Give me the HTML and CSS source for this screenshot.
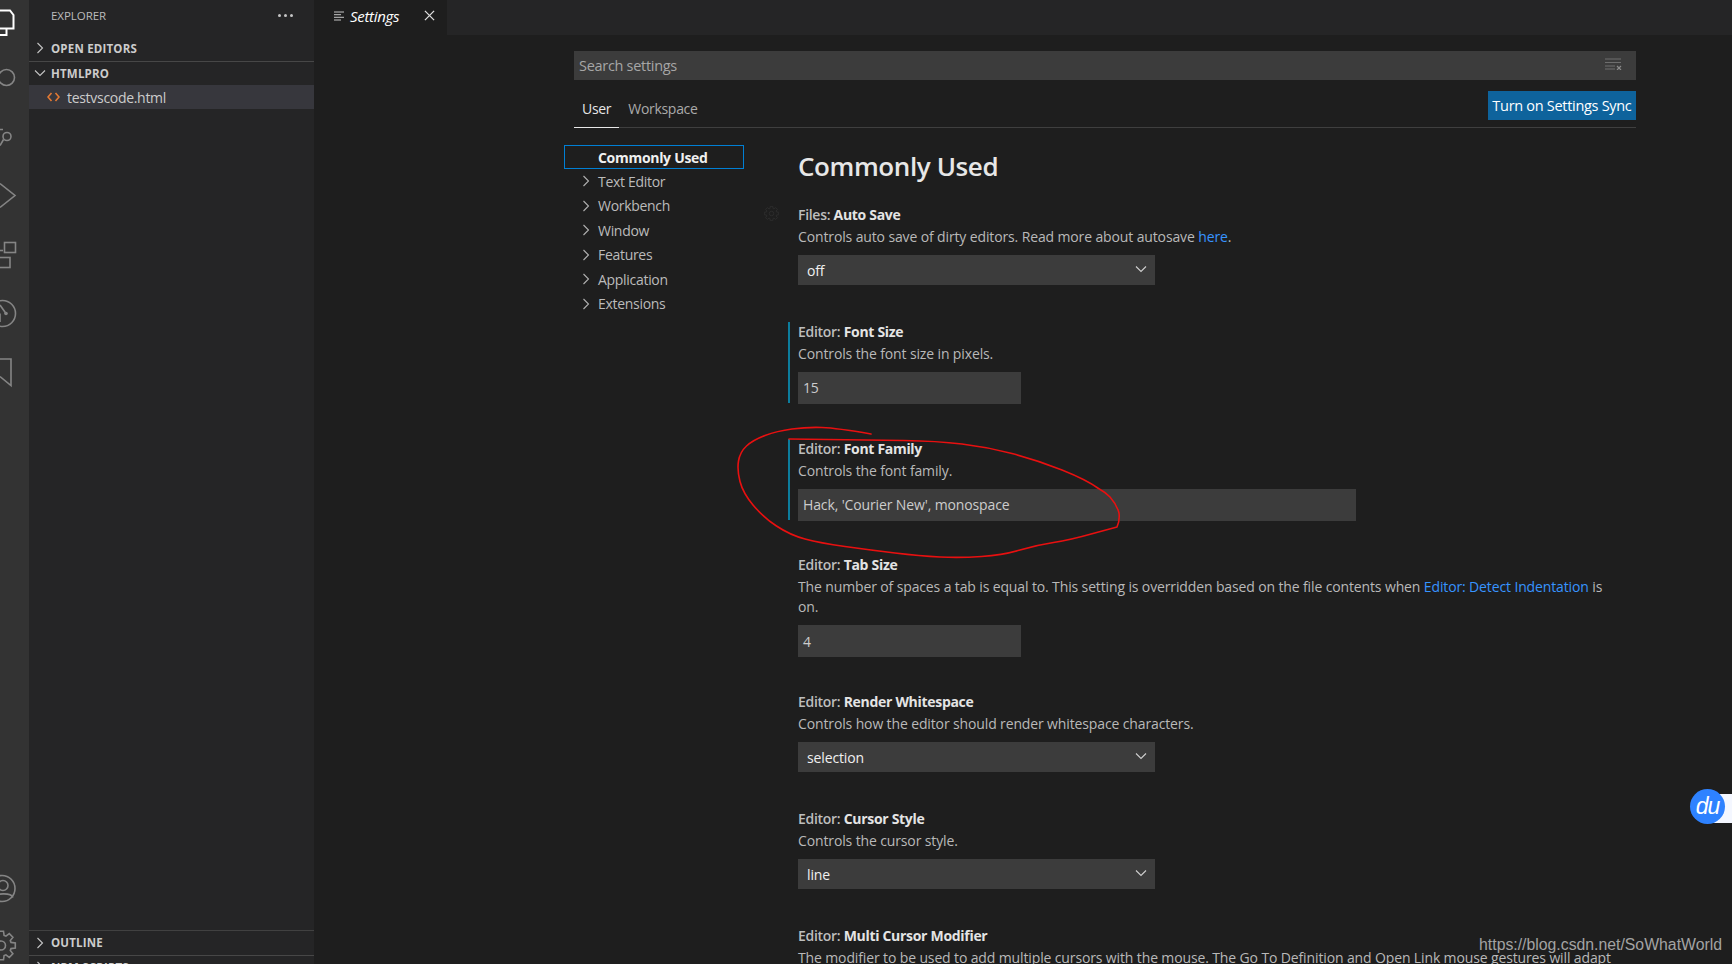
FILE: index.html
```html
<!DOCTYPE html>
<html lang="en">
<head>
    <meta charset="UTF-8">
    <title>Settings</title>
    <link rel="stylesheet" href="styles.css">
</head>
<body>
    <div class="app">
        <!-- activity bar, cut off on the left in the capture -->
        <nav class="activity">
            <div class="activity-list">
                <svg class="act-icon act-on" viewBox="0 0 29 59"><path d="M0 21.5H10L13.5 26V39.5H0M6.5 39.5V46H0"/></svg>
                <svg class="act-icon" viewBox="0 0 29 59"><circle cx="6.5" cy="29.5" r="8"/></svg>
                <svg class="act-icon" viewBox="0 0 29 59"><circle cx="7" cy="29.5" r="4"/><path d="M3.5 32.5L0 38.5M0 22.5H3"/></svg>
                <svg class="act-icon" viewBox="0 0 29 59"><path d="M0 17.5L15 29.5L0 41.5"/></svg>
                <svg class="act-icon" viewBox="0 0 29 59"><rect x="4.5" y="17.5" width="11" height="10"/><rect x="-3" y="32.5" width="13" height="10"/><path d="M0 25.5H3"/></svg>
                <svg class="act-icon" viewBox="0 0 29 59"><circle cx="2.5" cy="29.5" r="13"/><path d="M0 21L6 29.5M0 29.5V38"/><circle class="dot" cx="6" cy="29.5" r="1.8"/></svg>
                <svg class="act-icon" viewBox="0 0 29 59"><path d="M0 16H11V42.5L0 33.5"/></svg>
            </div>
            <div class="activity-list activity-bottom">
                <svg class="act-icon" viewBox="0 0 29 59"><circle cx="2" cy="31.5" r="13"/><circle cx="3" cy="28.5" r="5"/><path d="M-7 41.5C-5 35.5 11 35.5 13 40.5"/></svg>
                <svg class="act-icon" viewBox="0 0 29 59"><g transform="translate(1 29.5)"><path d="M-2.5 -14.3H2.5L3.1 -10L4.9 -9.3L8.3 -11.9L11.9 -8.3L9.3 -4.9L10 -3.1L14.3 -2.5V2.5L10 3.1L9.3 4.9L11.9 8.3L8.3 11.9L4.9 9.3L3.1 10L2.5 14.3H-2.5"/><circle r="4.5"/></g></svg>
            </div>
        </nav>

        <aside class="sidebar">
            <div class="side-head">
                <span>EXPLORER</span>
                <span class="dots"><i></i><i></i><i></i></span>
            </div>
            <div class="section">
                <svg class="chev" viewBox="0 0 12 12"><path d="M3.5 1L8.5 6L3.5 11"/></svg>
                OPEN EDITORS
            </div>
            <div class="section section-line">
                <svg class="chev" viewBox="0 0 12 12"><path d="M1 3.5L6 8.5L11 3.5"/></svg>
                HTMLPRO
            </div>
            <div class="file-row">
                <svg class="file-icon" viewBox="0 0 13 10"><path d="M4.5 1L1 5L4.5 9M8.5 1L12 5L8.5 9"/></svg>
                testvscode.html
            </div>
            <div class="side-space"></div>
            <div class="section section-line">
                <svg class="chev" viewBox="0 0 12 12"><path d="M3.5 1L8.5 6L3.5 11"/></svg>
                OUTLINE
            </div>
            <div class="section section-line section-cut">
                <svg class="chev" viewBox="0 0 12 12"><path d="M3.5 1L8.5 6L3.5 11"/></svg>
                NPM SCRIPTS
            </div>
        </aside>

        <main class="editor">
            <div class="tabbar">
                <div class="tab">
                    <svg class="tab-icon" viewBox="0 0 10 10"><path d="M0 1H10M0 3.7H7M0 6.3H10M0 9H7"/></svg>
                    <span class="tab-name">Settings</span>
                    <svg class="tab-close" viewBox="0 0 12 12"><path d="M1 1L11 11M11 1L1 11"/></svg>
                </div>
            </div>

            <div class="settings">
                <div class="search">
                    <span>Search settings</span>
                    <svg class="clear-icon" viewBox="0 0 17 12"><path d="M0 1H16M0 4.5H16M0 8H10M0 11H10"/><path class="x" d="M12 8L16 12M16 8L12 12"/></svg>
                </div>

                <div class="scope">
                    <span class="scope-tab scope-on">User</span>
                    <span class="scope-tab">Workspace</span>
                    <button class="sync">Turn on Settings Sync</button>
                </div>

                <div class="body">
                    <ul class="toc">
                        <li class="toc-on">Commonly Used</li>
                        <li><svg class="chev" viewBox="0 0 12 12"><path d="M3.5 1L8.5 6L3.5 11"/></svg>Text Editor</li>
                        <li><svg class="chev" viewBox="0 0 12 12"><path d="M3.5 1L8.5 6L3.5 11"/></svg>Workbench</li>
                        <li><svg class="chev" viewBox="0 0 12 12"><path d="M3.5 1L8.5 6L3.5 11"/></svg>Window</li>
                        <li><svg class="chev" viewBox="0 0 12 12"><path d="M3.5 1L8.5 6L3.5 11"/></svg>Features</li>
                        <li><svg class="chev" viewBox="0 0 12 12"><path d="M3.5 1L8.5 6L3.5 11"/></svg>Application</li>
                        <li><svg class="chev" viewBox="0 0 12 12"><path d="M3.5 1L8.5 6L3.5 11"/></svg>Extensions</li>
                    </ul>

                    <div class="list">
                        <h1>Commonly Used</h1>

                        <div class="item">
                            <svg class="row-gear" viewBox="-15 -15 30 30"><path d="M-2.5 -14.3H2.5L3.1 -10L4.9 -9.3L8.3 -11.9L11.9 -8.3L9.3 -4.9L10 -3.1L14.3 -2.5V2.5L10 3.1L9.3 4.9L11.9 8.3L8.3 11.9L4.9 9.3L3.1 10L2.5 14.3H-2.5L-3.1 10L-4.9 9.3L-8.3 11.9L-11.9 8.3L-9.3 4.9L-10 3.1L-14.3 2.5V-2.5L-10 -3.1L-9.3 -4.9L-11.9 -8.3L-8.3 -11.9L-4.9 -9.3L-3.1 -10Z"/><circle r="4.5"/></svg>
                            <div class="title">Files: <b>Auto Save</b></div>
                            <div class="desc">Controls auto save of dirty editors. Read more about autosave <a>here</a>.</div>
                            <div class="select">off<svg class="sel-chev" viewBox="0 0 12 12"><path d="M1 3.5L6 8.5L11 3.5"/></svg></div>
                        </div>

                        <div class="item item-mod">
                            <div class="title">Editor: <b>Font Size</b></div>
                            <div class="desc">Controls the font size in pixels.</div>
                            <div class="input input-num">15</div>
                        </div>

                        <div class="item item-mod">
                            <div class="title">Editor: <b>Font Family</b></div>
                            <div class="desc">Controls the font family.</div>
                            <div class="input input-wide">Hack, 'Courier New', monospace</div>
                        </div>

                        <div class="item item-long">
                            <div class="title">Editor: <b>Tab Size</b></div>
                            <div class="desc">The number of spaces a tab is equal to. This setting is overridden based on the file contents when <a>Editor: Detect Indentation</a> is on.</div>
                            <div class="input input-num">4</div>
                        </div>

                        <div class="item">
                            <div class="title">Editor: <b>Render Whitespace</b></div>
                            <div class="desc">Controls how the editor should render whitespace characters.</div>
                            <div class="select">selection<svg class="sel-chev" viewBox="0 0 12 12"><path d="M1 3.5L6 8.5L11 3.5"/></svg></div>
                        </div>

                        <div class="item">
                            <div class="title">Editor: <b>Cursor Style</b></div>
                            <div class="desc">Controls the cursor style.</div>
                            <div class="select">line<svg class="sel-chev" viewBox="0 0 12 12"><path d="M1 3.5L6 8.5L11 3.5"/></svg></div>
                        </div>

                        <div class="item">
                            <div class="title">Editor: <b>Multi Cursor Modifier</b></div>
                            <div class="desc">The modifier to be used to add multiple cursors with the mouse. The Go To Definition and Open Link mouse gestures will adapt</div>
                        </div>
                    </div>
                </div>
            </div>
        </main>
    </div>

    <!-- hand drawn mark over the Font Family setting -->
    <svg class="scribble" viewBox="0 0 1732 964">
        <path d="M871 434Q837 428 822 427.5Q807 427 792 429Q777 431 765 435.5Q753 440 746.5 446Q740 452 738.5 461Q737 470 740 481.5Q743 493 753 505Q763 517 776.5 526Q790 535 805 539Q820 543 845 546.5Q870 550 895 553Q920 556 940 557Q960 558 981.5 556.5Q1003 555 1020 550Q1037 545 1053.5 542.5Q1070 540 1093 533.5L1117 527Q1120 520 1119 513Q1117 505 1110 497Q1105 492 1098.5 488.5Q1087 480 1062 470Q1037 460 1012 453.5Q987 447 962 444Q937 441 903.5 440.5Q870 440 789 439"/>
    </svg>

    <div class="du-badge"><span class="du-circle">du</span></div>
    <div class="watermark">https://blog.csdn.net/SoWhatWorld</div>
</body>
</html>
```

FILE: styles.css
```css
* { box-sizing: border-box; }
html, body {
    margin: 0;
    height: 964px;
    overflow: hidden;
    background: #1e1e1e;
}
body {
    font-family: "Open Sans", "Noto Sans", sans-serif;
    font-size: 14px;
    letter-spacing: -0.3px;
    color: #ccc;
}
svg { fill: none; flex: none; }
ul { list-style: none; margin: 0; padding: 0; }
h1 { margin: 0; }

.app {
    display: flex;
    height: 964px;
}

/* activity bar */
.activity {
    width: 29px;
    flex: none;
    display: flex;
    flex-direction: column;
    justify-content: space-between;
    background: #333;
    overflow: hidden;
}
.activity-list {
    display: flex;
    flex-direction: column;
    margin-top: -11.5px;
}
.activity-bottom { margin: 0 0 -11px; }
.act-icon {
    display: block;
    width: 29px;
    height: 59px;
    stroke: #858585;
    stroke-width: 1.6;
}
.act-on { stroke: #fff; stroke-width: 2; }
.act-icon .dot { fill: #858585; stroke: none; }

/* sidebar */
.sidebar {
    width: 285px;
    flex: none;
    display: flex;
    flex-direction: column;
    background: #252526;
    overflow: hidden;
}
.side-head {
    height: 36px;
    flex: none;
    display: flex;
    align-items: center;
    justify-content: space-between;
    padding: 0 21px 6px 22px;
    font-size: 11.5px;
    letter-spacing: -0.05px;
    color: #bbb;
}
.dots { display: flex; gap: 3px; }
.dots i {
    width: 3px;
    height: 3px;
    background: #c5c5c5;
    border-radius: 50%;
}
.section {
    height: 24.5px;
    flex: none;
    display: flex;
    align-items: center;
    gap: 5px;
    padding-left: 5px;
    font-size: 11.5px;
    font-weight: 700;
    letter-spacing: 0.2px;
    color: #ccc;
}
.section-line { border-top: 1px solid #414141; }
.section + .section-line { border-top-color: #474747; }
.section-cut { margin-bottom: -15px; }
.chev {
    width: 12px;
    height: 12px;
    stroke: #c5c5c5;
    stroke-width: 1.1;
}
.file-row {
    height: 24px;
    flex: none;
    display: flex;
    align-items: center;
    gap: 7px;
    padding-left: 18px;
    background: #37373d;
    font-size: 14px;
    color: #ccc;
}
.file-icon {
    width: 13px;
    height: 10px;
    stroke: #e37933;
    stroke-width: 1.6;
}
.side-space { flex: 1; }

/* editor */
.editor {
    flex: 1;
    min-width: 0;
    overflow: hidden;
}
.tabbar {
    height: 35px;
    background: #252526;
}
.tab {
    width: 133px;
    height: 35px;
    display: flex;
    align-items: center;
    padding: 0 12px 4px 20px;
    background: #1e1e1e;
    font-style: italic;
    color: #fff;
}
.tab-icon {
    width: 10px;
    height: 10px;
    stroke: #c5c5c5;
    stroke-width: 1;
}
.tab-name { margin-left: 6px; font-size: 15px; }
.tab-close {
    width: 11px;
    height: 11px;
    margin-left: auto;
    stroke: #e0e0e0;
    stroke-width: 1.4;
}

.settings {
    width: 1062px;
    margin-left: 260px;
    padding-top: 16px;
}
.search {
    height: 29px;
    display: flex;
    align-items: center;
    justify-content: space-between;
    padding: 0 14px 0 5px;
    background: #3c3c3c;
    color: #a6a6a6;
    font-size: 14.5px;
}
.clear-icon {
    width: 17px;
    height: 12px;
    margin-bottom: 3px;
    stroke: #6e6e6e;
    stroke-width: 1.2;
}
.clear-icon .x { stroke: #8a8a8a; }

.scope {
    height: 48px;
    display: flex;
    align-items: flex-end;
    border-bottom: 1px solid #3f3f3f;
    position: relative;
}
.scope-tab {
    height: 36px;
    padding: 0 9px;
    margin-bottom: -1px;
    line-height: 34px;
    color: #aaa;
}
.scope-on {
    padding: 0 8px;
    color: #e7e7e7;
    border-bottom: 1px solid #e7e7e7;
}
.sync {
    height: 29px;
    margin: 0 0 7px auto;
    padding: 0 4.5px;
    border: 0;
    background: #0e639c;
    color: #fff;
    font: inherit;
    font-size: 14.5px;
    letter-spacing: -0.3px;
    align-self: flex-end;
}

.body { display: flex; }
.toc {
    width: 180px;
    margin: 17px 0 0 -10px;
    flex: none;
}
.toc li {
    height: 24.5px;
    display: flex;
    align-items: center;
    gap: 6px;
    padding-left: 16px;
    color: #bbb;
}
.toc .chev { stroke: #b0b0b0; }
.toc .toc-on {
    height: 24px;
    padding-left: 33px;
    border: 1px solid #007fd4;
    font-weight: 700;
    color: #f0f0f0;
}
.list {
    flex: 1;
    min-width: 0;
    margin-left: 54px;
    padding-top: 13px;
}
h1 {
    height: 50px;
    font-size: 26px;
    font-weight: 600;
    line-height: 50px;
    letter-spacing: -0.4px;
    color: #e7e7e7;
}
.item {
    position: relative;
    height: 116.8px;
    margin-left: -10px;
    padding: 11px 10px 0 8px;
    border-left: 2px solid transparent;
}
.item-long { height: 137px; }
.item-mod::before {
    content: "";
    position: absolute;
    left: -2px;
    top: 14px;
    height: 81px;
    width: 2px;
    background: #0c7d9d;
}
.row-gear {
    position: absolute;
    left: -26px;
    top: 15px;
    width: 15px;
    height: 15px;
    stroke: #2c2c2c;
    stroke-width: 2;
}
.title {
    height: 25px;
    line-height: 25px;
    color: #bdbdbd;
    font-weight: 600;
}
.title b { color: #e4e4e4; font-weight: 700; }
.desc {
    max-width: 815px;
    line-height: 20px;
    margin-bottom: 8px;
    letter-spacing: -0.13px;
    color: #b9b9b9;
}
.desc a { color: #3794ff; }
.select, .input {
    display: flex;
    align-items: center;
    background: #3c3c3c;
    color: #f0f0f0;
    letter-spacing: -0.13px;
}
.select {
    position: relative;
    width: 357px;
    height: 30px;
    padding-left: 9px;
}
.sel-chev {
    position: absolute;
    right: 8px;
    top: 8px;
    width: 12px;
    height: 12px;
    stroke: #d0d0d0;
    stroke-width: 1.1;
}
.input {
    height: 32px;
    margin-top: 1px;
    padding-left: 5px;
    color: #ccc;
}
.input-num { width: 223px; }
.input-wide { width: 558px; }

/* overlays: annotation, browser badge and watermark from the capture */
.scribble {
    position: absolute;
    left: 0;
    top: 0;
    width: 1732px;
    height: 964px;
    pointer-events: none;
    stroke: #e81010;
    stroke-width: 1.6;
    stroke-linecap: round;
    stroke-linejoin: round;
}
.du-badge {
    position: absolute;
    right: 0;
    top: 794px;
    width: 24px;
    height: 29px;
    background: #f4f7ff;
}
.du-circle {
    position: absolute;
    left: -18px;
    top: -5px;
    width: 35px;
    height: 35px;
    display: flex;
    align-items: center;
    justify-content: center;
    border-radius: 50%;
    background: #2e82ff;
    color: #fff;
    font: italic 400 23px "Liberation Sans", sans-serif;
    letter-spacing: -1px;
}
.watermark {
    position: absolute;
    right: 10px;
    top: 936px;
    font: 15.8px "Liberation Sans", sans-serif;
    letter-spacing: 0;
    color: #a3a3a3;
    white-space: nowrap;
}
```
